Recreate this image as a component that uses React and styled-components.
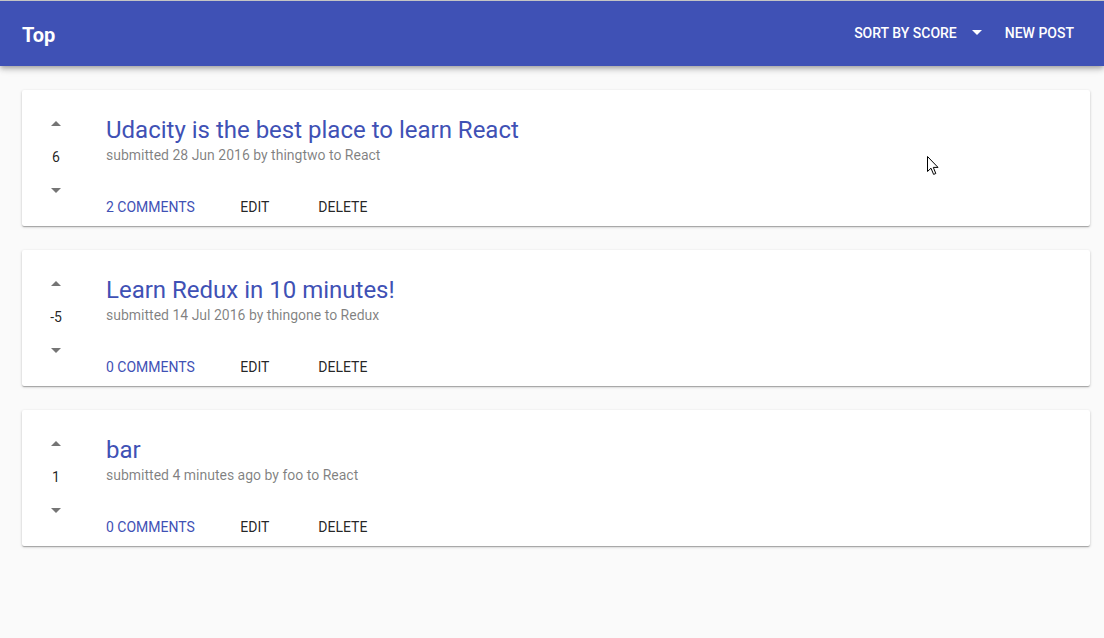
import React from "react";
import styled, { createGlobalStyle } from "styled-components";

const GlobalStyle = createGlobalStyle`
  html, body {
    margin: 0;
    padding: 0;
    background: #fafafa;
    font-family: Roboto, "Liberation Sans", sans-serif;
  }
  body {
    border-top: 1px solid #c4c4c4;
    min-height: 637px;
  }
`;

const AppBar = styled.header`
  height: 65px;
  background: #3f51b5;
  color: #fff;
  display: flex;
  align-items: center;
  padding: 0 14px 0 22px;
  box-shadow: 0 2px 4px -1px rgba(0, 0, 0, 0.2), 0 4px 5px 0 rgba(0, 0, 0, 0.14),
    0 1px 10px 0 rgba(0, 0, 0, 0.12);
  position: relative;
  z-index: 1;
`;

const Title = styled.h1`
  margin: 0;
  font-size: 20px;
  font-weight: 700;
  flex: 1;
  padding-top: 3px;
`;

const SortSelect = styled.div`
  display: flex;
  align-items: center;
  font-size: 14px;
  font-weight: 500;
  text-transform: uppercase;
  gap: 14px;
  padding: 0 6px 2px 0;
`;

const ToolbarButton = styled.button`
  background: none;
  border: 0;
  color: #fff;
  font: inherit;
  font-size: 14px;
  font-weight: 500;
  text-transform: uppercase;
  padding: 0 16px 2px;
  height: 36px;
  cursor: pointer;
`;

const Main = styled.main`
  display: flex;
  flex-direction: column;
  gap: 24px;
  padding: 24px 14px 0 22px;
`;

const Card = styled.article`
  background: #fff;
  border-radius: 2px;
  height: 136px;
  display: flex;
  box-shadow: 0 1px 3px 0 rgba(0, 0, 0, 0.2), 0 1px 1px 0 rgba(0, 0, 0, 0.14),
    0 2px 1px -1px rgba(0, 0, 0, 0.12);
`;

const Votes = styled.div`
  width: 68px;
  padding-top: 16px;
  display: flex;
  flex-direction: column;
  align-items: center;
`;

const VoteCell = styled.div`
  height: 34px;
  display: flex;
  align-items: center;
  justify-content: center;
  font-size: 14px;
  color: rgba(0, 0, 0, 0.87);
`;

const Body = styled.div`
  margin-left: 16px;
  padding-top: 26px;
  display: flex;
  flex-direction: column;
`;

const PostTitle = styled.a`
  font-size: 24px;
  line-height: 28px;
  color: #3f51b5;
  text-decoration: none;
`;

const Meta = styled.div`
  margin-top: 1px;
  font-size: 14px;
  line-height: 20px;
  color: rgba(0, 0, 0, 0.5);
`;

const Actions = styled.div`
  display: flex;
  margin: 24px 0 0 -16px;
`;

const ActionButton = styled.button`
  background: none;
  border: 0;
  min-width: 88px;
  height: 36px;
  padding: 0 16px;
  font-family: Roboto, "Liberation Sans", sans-serif;
  font-size: 14px;
  font-weight: 400;
  text-transform: uppercase;
  color: ${(p) => (p.$primary ? "#3f51b5" : "rgba(0, 0, 0, 0.87)")};
  cursor: pointer;
`;

const Cursor = styled.svg`
  position: absolute;
  left: 927px;
  top: 156px;
  pointer-events: none;
`;

const Caret = ({ up, color = "#757575" }) => (
  <svg width="12" height="6" viewBox="0 0 12 6">
    <path d={up ? "M1 6 L6 1 L11 6 Z" : "M1 0 L6 5 L11 0 Z"} fill={color} />
  </svg>
);

const posts = [
  { title: "Udacity is the best place to learn React", meta: "submitted 28 Jun 2016 by thingtwo to React", score: 6, comments: 2 },
  { title: "Learn Redux in 10 minutes!", meta: "submitted 14 Jul 2016 by thingone to Redux", score: -5, comments: 0 },
  { title: "bar", meta: "submitted 4 minutes ago by foo to React", score: 1, comments: 0 },
];

export default function App() {
  return (
    <>
      <GlobalStyle />
      <AppBar>
        <Title>Top</Title>
        <SortSelect>
          Sort by score
          <Caret color="#fff" />
        </SortSelect>
        <ToolbarButton>New post</ToolbarButton>
      </AppBar>
      <Main>
        {posts.map((post) => (
          <Card key={post.title}>
            <Votes>
              <VoteCell><Caret up /></VoteCell>
              <VoteCell>{post.score}</VoteCell>
              <VoteCell><Caret /></VoteCell>
            </Votes>
            <Body>
              <PostTitle href="#">{post.title}</PostTitle>
              <Meta>{post.meta}</Meta>
              <Actions>
                <ActionButton $primary>{post.comments} comments</ActionButton>
                <ActionButton>Edit</ActionButton>
                <ActionButton>Delete</ActionButton>
              </Actions>
            </Body>
          </Card>
        ))}
      </Main>
      <Cursor width="13" height="20" viewBox="0 0 13 20">
        <path d="M0.5 0.5 L0.5 15.5 L4 12.2 L6.6 18.4 L8.8 17.5 L6.3 11.4 L11 11.4 Z" fill="#fff" stroke="#000" strokeWidth="1" strokeLinejoin="miter" />
      </Cursor>
    </>
  );
}
